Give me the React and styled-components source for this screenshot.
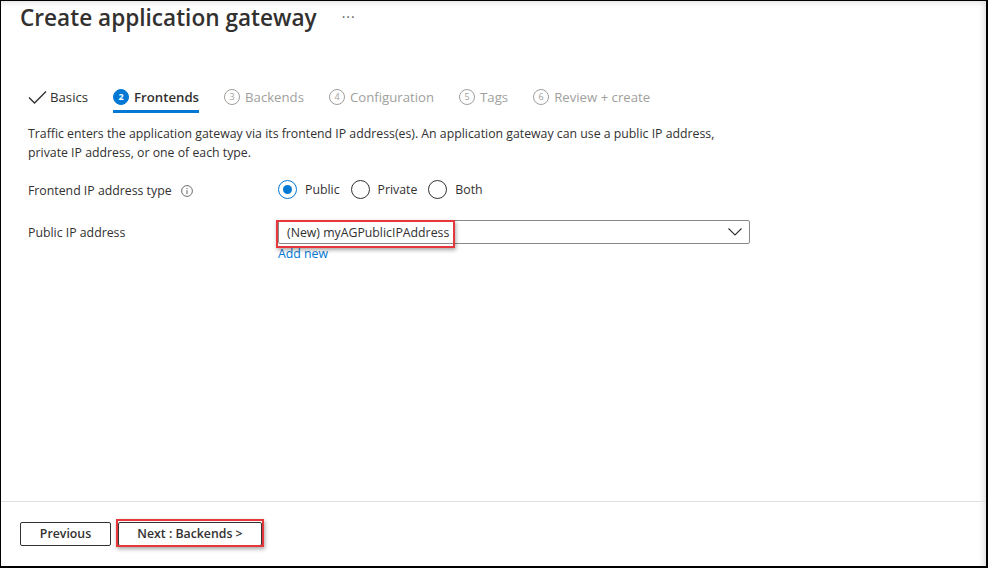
import React from 'react'
import styled, { createGlobalStyle } from 'styled-components'

const GlobalStyle = createGlobalStyle`
  html, body { margin: 0; padding: 0; background: #fff; }
  body {
    font-family: "Open Sans", "Noto Sans", sans-serif;
    color: #323130;
    -webkit-font-smoothing: antialiased;
  }
`

const Frame = styled.div`
  box-sizing: border-box;
  width: 988px;
  height: 568px;
  border-left: 1px solid #000;
  border-top: 1px solid #000;
  border-right: 2px solid #000;
  border-bottom: 2px solid #000;
  box-shadow: inset -6px 5px 6px -4px rgba(0, 0, 0, 0.14);
  display: flex;
  flex-direction: column;
  overflow: hidden;
`

const Header = styled.div`
  height: 34px;
  padding-left: 19px;
  display: flex;
  align-items: center;
`

const Title = styled.h1`
  margin: 0;
  font-size: 22.6px;
  font-weight: 600;
  line-height: 34px;
  color: #323130;
`

const More = styled.span`
  margin-left: 25px;
  margin-top: -4px;
  font-size: 14px;
  letter-spacing: 1px;
  color: #605e5c;
`

const TabBar = styled.div`
  display: flex;
  gap: 25px;
  margin-top: 48px;
  padding-left: 27px;
`

const Tab = styled.div`
  box-sizing: border-box;
  height: 30px;
  display: flex;
  align-items: center;
  gap: ${p => (p.check ? 3 : 5)}px;
  font-size: 13.2px;
  font-weight: ${p => (p.active ? 600 : 400)};
  color: ${p => (p.disabled ? '#a19f9d' : '#323130')};
  border-bottom: 3px solid ${p => (p.active ? '#0078d4' : 'transparent')};
`

const StepCircle = styled.span`
  box-sizing: border-box;
  width: 16px;
  height: 16px;
  border-radius: 50%;
  display: inline-flex;
  align-items: center;
  justify-content: center;
  font-size: 9px;
  font-weight: ${p => (p.active ? 700 : 400)};
  color: ${p => (p.active ? '#fff' : '#a19f9d')};
  background: ${p => (p.active ? '#0078d4' : 'transparent')};
  border: 1px solid ${p => (p.active ? '#0078d4' : '#a19f9d')};
`

const Content = styled.div`
  padding-left: 27px;
  font-size: 12.3px;
`

const Description = styled.p`
  margin: 11px 0 0;
  line-height: 19px;
  white-space: nowrap;
`

const FieldRow = styled.div`
  display: flex;
  align-items: ${p => (p.top ? 'flex-start' : 'center')};
  margin-top: ${p => p.gap}px;
  min-height: 26px;
`

const Label = styled.div`
  width: 250px;
  flex: none;
  display: flex;
  align-items: center;
  gap: 9px;
  line-height: 24px;
  padding-top: ${p => (p.shift ? 1 : 0)}px;
`

const RadioGroup = styled.div`
  display: flex;
  align-items: center;
  gap: 11px;
  margin-top: -3px;
`

const RadioOption = styled.label`
  display: flex;
  align-items: center;
  gap: 8px;
`

const RadioCircle = styled.span`
  box-sizing: border-box;
  width: 19px;
  height: 19px;
  border-radius: 50%;
  border: 1px solid ${p => (p.checked ? '#0078d4' : '#323130')};
  display: inline-flex;
  align-items: center;
  justify-content: center;
  &::after {
    content: '';
    width: 9px;
    height: 9px;
    border-radius: 50%;
    background: ${p => (p.checked ? '#0078d4' : 'transparent')};
  }
`

const FieldColumn = styled.div`
  display: flex;
  flex-direction: column;
`

const Select = styled.div`
  position: relative;
  box-sizing: border-box;
  width: 472px;
  height: 24px;
  border: 1px solid #8a8886;
  border-radius: 2px;
  display: flex;
  align-items: center;
  justify-content: space-between;
  padding: 0 7px 0 8px;
`

const SelectValue = styled.span`
  color: #323130;
`

const Highlight = styled.span`
  position: absolute;
  left: -3px;
  top: -1px;
  width: 179px;
  height: 28px;
  box-sizing: border-box;
  border: 2px solid #e5373c;
  box-shadow: 1px 2px 4px rgba(0, 0, 0, 0.35);
  pointer-events: none;
`

const Link = styled.a`
  margin-top: 2px;
  color: #0078d4;
  line-height: 16px;
  text-decoration: none;
`

const Spacer = styled.div`
  flex: 1;
`

const Footer = styled.div`
  border-top: 1px solid #e1dfdd;
  height: 65px;
  padding: 20px 0 0 19px;
  box-sizing: border-box;
  display: flex;
  gap: 7px;
  align-items: flex-start;
`

const Button = styled.button`
  position: relative;
  box-sizing: border-box;
  height: 24px;
  width: ${p => p.w}px;
  background: #fff;
  border: 1px solid #323130;
  border-radius: 2px;
  font-family: inherit;
  font-size: 12.3px;
  font-weight: 600;
  line-height: 20px;
  color: #323130;
  padding: 0;
  ${p =>
    p.highlighted &&
    `
    &::after {
      content: '';
      position: absolute;
      left: -3px;
      right: -3px;
      top: -4px;
      bottom: -2px;
      border: 2px solid #e5373c;
      box-shadow: 1px 2px 4px rgba(0, 0, 0, 0.35);
    }
  `}
`

const CheckIcon = () => (
  <svg width="19" height="14" viewBox="0 0 19 14">
    <path d="M1 7.5 L6.5 13 L18 1.5" fill="none" stroke="#323130" strokeWidth="1.4" />
  </svg>
)

const InfoIcon = () => (
  <svg width="12" height="12" viewBox="0 0 12 12">
    <circle cx="6" cy="6" r="5.4" fill="none" stroke="#605e5c" strokeWidth="0.9" />
    <circle cx="6" cy="3.6" r="0.7" fill="#605e5c" />
    <path d="M6 5.2 V9" stroke="#605e5c" strokeWidth="1" />
  </svg>
)

const ChevronDown = () => (
  <svg width="14" height="8" viewBox="0 0 14 8">
    <path d="M0.5 0.5 L7 7 L13.5 0.5" fill="none" stroke="#323130" strokeWidth="1.1" />
  </svg>
)

const steps = [
  { n: 2, label: 'Frontends', active: true },
  { n: 3, label: 'Backends' },
  { n: 4, label: 'Configuration' },
  { n: 5, label: 'Tags' },
  { n: 6, label: 'Review + create' },
]

const radios = [
  { label: 'Public', checked: true },
  { label: 'Private' },
  { label: 'Both' },
]

export default function App() {
  return (
    <>
      <GlobalStyle />
      <Frame>
        <Header>
          <Title>Create application gateway</Title>
          <More>···</More>
        </Header>

        <TabBar>
          <Tab check>
            <CheckIcon />
            Basics
          </Tab>
          {steps.map(s => (
            <Tab key={s.n} active={s.active} disabled={!s.active}>
              <StepCircle active={s.active}>{s.n}</StepCircle>
              {s.label}
            </Tab>
          ))}
        </TabBar>

        <Content>
          <Description>
            Traffic enters the application gateway via its frontend IP address(es). An application gateway can use a public IP address,
            <br />
            private IP address, or one of each type.
          </Description>

          <FieldRow gap={16}>
            <Label>
              Frontend IP address type <InfoIcon />
            </Label>
            <RadioGroup>
              {radios.map(r => (
                <RadioOption key={r.label}>
                  <RadioCircle checked={r.checked} />
                  {r.label}
                </RadioOption>
              ))}
            </RadioGroup>
          </FieldRow>

          <FieldRow gap={16} top>
            <Label shift>Public IP address</Label>
            <FieldColumn>
              <Select>
                <SelectValue>(New) myAGPublicIPAddress</SelectValue>
                <ChevronDown />
                <Highlight />
              </Select>
              <Link href="#">Add new</Link>
            </FieldColumn>
          </FieldRow>
        </Content>

        <Spacer />

        <Footer>
          <Button w={91}>Previous</Button>
          <Button w={144} highlighted>
            Next : Backends &gt;
          </Button>
        </Footer>
      </Frame>
    </>
  )
}
